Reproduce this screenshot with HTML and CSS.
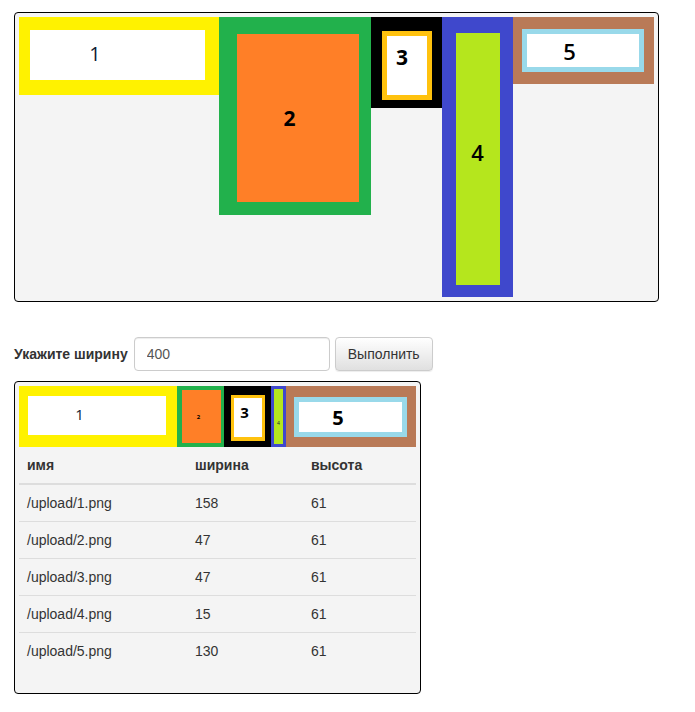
FILE: index.html
```html
<!DOCTYPE html>
<html>
<head>
<meta charset="utf-8">
<link rel="stylesheet" href="styles.css">
</head>
<body>
<div class="canvas">
  <svg class="pic" width="200" height="78" viewBox="0 0 200 78">
    <rect width="200" height="78" fill="#fff200"/>
    <rect x="11" y="13" width="175" height="50" fill="#fff"/>
    <text class="dg" x="76" y="44" font-size="20" text-anchor="middle">1</text>
  </svg>
  <svg class="pic" width="152" height="198" viewBox="0 0 152 198">
    <rect width="152" height="198" fill="#22b14c"/>
    <rect x="18" y="17" width="122" height="168" fill="#ff7f27"/>
    <text class="dg b" x="70.5" y="109" font-size="21" text-anchor="middle">2</text>
  </svg>
  <svg class="pic" width="71" height="91" viewBox="0 0 71 91">
    <rect width="71" height="91" fill="#000"/>
    <rect x="11" y="14" width="50" height="69" fill="#ffc20e"/>
    <rect x="16" y="19" width="40" height="59" fill="#fff"/>
    <text class="dg b" x="31" y="48" font-size="21" text-anchor="middle">3</text>
  </svg>
  <svg class="pic" width="71" height="280" viewBox="0 0 71 280">
    <rect width="71" height="280" fill="#3f48cc"/>
    <rect x="14" y="16" width="44" height="252" fill="#b5e61d"/>
    <text class="dg m" x="35.5" y="144" font-size="22" text-anchor="middle">4</text>
  </svg>
  <svg class="pic" width="141" height="67" viewBox="0 0 141 67">
    <rect width="141" height="67" fill="#b97a57"/>
    <rect x="9" y="12" width="122" height="43" fill="#99d9ea"/>
    <rect x="14" y="17" width="112" height="33" fill="#fff"/>
    <text class="dg m" x="56.5" y="43" font-size="22" text-anchor="middle">5</text>
  </svg>
</div>

<form class="form">
  <label class="lbl">Укажите ширину</label>
  <input class="inp" type="text" value="400">
  <button class="btn" type="button">Выполнить</button>
</form>

<div class="result">
  <div class="strip">
    <svg class="pic" width="158" height="61" viewBox="0 0 158 61">
      <rect width="158" height="61" fill="#fff200"/>
      <rect x="9" y="10" width="138" height="39" fill="#fff"/>
      <text class="dg" x="60.5" y="34" font-size="15" text-anchor="middle">1</text>
    </svg>
    <svg class="pic" width="47" height="61" viewBox="0 0 47 61">
      <rect width="47" height="61" fill="#22b14c"/>
      <rect x="5" y="4" width="39" height="53" fill="#ff7f27"/>
      <text class="dg b" x="21.5" y="33" font-size="6" text-anchor="middle">2</text>
    </svg>
    <svg class="pic" width="47" height="61" viewBox="0 0 47 61">
      <rect width="47" height="61" fill="#000"/>
      <rect x="7" y="9" width="34" height="46" fill="#ffc20e"/>
      <rect x="10" y="12" width="28" height="39" fill="#fff"/>
      <text class="dg b" x="20.5" y="32" font-size="15" text-anchor="middle">3</text>
    </svg>
    <svg class="pic" width="15" height="61" viewBox="0 0 15 61">
      <rect width="15" height="61" fill="#3f48cc"/>
      <rect x="3" y="3" width="9" height="55" fill="#b5e61d"/>
      <text class="dg" x="7.5" y="39" font-size="5" text-anchor="middle">4</text>
    </svg>
    <svg class="pic" width="130" height="61" viewBox="0 0 130 61">
      <rect width="130" height="61" fill="#b97a57"/>
      <rect x="8" y="11" width="113" height="40" fill="#99d9ea"/>
      <rect x="13" y="16" width="103" height="30" fill="#fff"/>
      <text class="dg b" x="52" y="39" font-size="20" text-anchor="middle">5</text>
    </svg>
  </div>
  <table class="tbl">
    <thead>
      <tr><th class="c1">имя</th><th class="c2">ширина</th><th class="c3">высота</th></tr>
    </thead>
    <tbody>
      <tr><td>/upload/1.png</td><td>158</td><td>61</td></tr>
      <tr><td>/upload/2.png</td><td>47</td><td>61</td></tr>
      <tr><td>/upload/3.png</td><td>47</td><td>61</td></tr>
      <tr><td>/upload/4.png</td><td>15</td><td>61</td></tr>
      <tr><td>/upload/5.png</td><td>130</td><td>61</td></tr>
    </tbody>
  </table>
</div>
</body>
</html>
```

FILE: styles.css
```css
html, body {
  margin: 0;
  background: #fff;
}
body {
  padding: 12px 14px 0;
  font-family: "Liberation Sans", Arial, sans-serif;
  font-size: 14px;
  line-height: 20px;
  color: #333;
}
.pic {
  display: block;
  flex: none;
}
.dg {
  font-family: "Open Sans", "Noto Sans", sans-serif;
  fill: #0d1b33;
}
.dg.b { font-weight: 700; fill: #000; }
.dg.m { font-weight: 600; fill: #000; }

.canvas {
  display: flex;
  align-items: flex-start;
  width: 635px;
  height: 280px;
  padding: 4px;
  border: 1px solid #000;
  border-radius: 4px;
  background: #f4f4f4;
}

.form {
  display: flex;
  align-items: center;
  margin: 35px 0 0;
  height: 34px;
}
.lbl {
  font-weight: 700;
  margin-right: 6px;
}
.inp {
  box-sizing: border-box;
  width: 196px;
  height: 34px;
  padding: 6px 12px;
  border: 1px solid #ccc;
  border-radius: 4px;
  box-shadow: inset 0 1px 1px rgba(0,0,0,.075);
  font-family: "Liberation Sans", Arial, sans-serif;
  font-size: 14px;
  color: #555;
  background: #fff;
  margin: 0;
}
.btn {
  box-sizing: border-box;
  width: 98px;
  height: 34px;
  margin: 0 0 0 5px;
  padding: 6px 12px;
  border: 1px solid #ccc;
  border-radius: 4px;
  background: linear-gradient(to bottom, #fff 0%, #e0e0e0 100%);
  box-shadow: inset 0 1px 0 rgba(255,255,255,.15), 0 1px 1px rgba(0,0,0,.075);
  font-family: "Liberation Sans", Arial, sans-serif;
  font-size: 14px;
  color: #333;
}

.result {
  width: 397px;
  margin-top: 10px;
  padding: 4px;
  border: 1px solid #000;
  border-radius: 4px;
  background: #f4f4f4;
}
.strip {
  display: flex;
}
.tbl {
  width: 397px;
  border-collapse: collapse;
  border-spacing: 0;
  margin-bottom: 20px;
}
.tbl th, .tbl td {
  padding: 8px;
  line-height: 20px;
  text-align: left;
  vertical-align: top;
}
.tbl th {
  font-weight: 700;
  border-bottom: 2px solid #ddd;
}
.tbl td {
  border-top: 1px solid #ddd;
}
.c1 { width: 152px; }
.c2 { width: 100px; }
.c3 { width: auto; }
```
